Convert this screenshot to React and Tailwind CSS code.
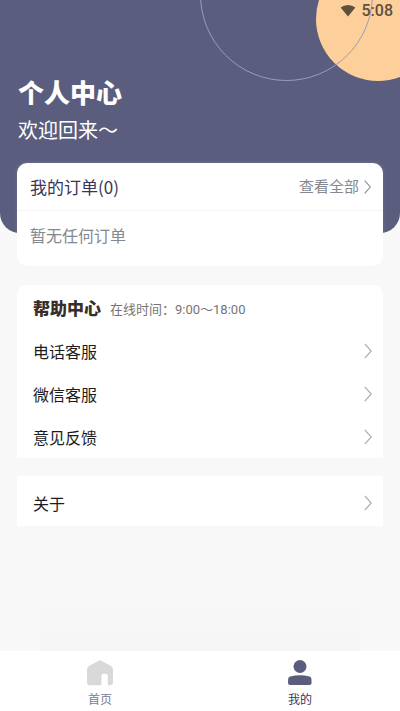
import React from "react";

const helpItems = [
  { id: 1, label: "电话客服" },
  { id: 2, label: "微信客服" },
  { id: 3, label: "意见反馈" },
];

const Chevron = ({ className }) => (
  <svg viewBox="0 0 8 16" fill="none" stroke="currentColor" className={className} aria-hidden="true">
    <path d="M0.8 0.8L7.2 8L0.8 15.2" strokeWidth="1.2" />
  </svg>
);

const HomeIcon = () => (
  <svg viewBox="0 0 26 26" className="h-[26px] w-[26px]" aria-hidden="true">
    <path
      d="M11.6 0.7Q13 0 14.4 0.7L24.4 6.2Q26 7.2 26 9V22.5Q26 25.2 23 25.2H20.8V16Q20.8 13.8 18.6 13.8H16.6Q14.4 13.8 14.4 16V25.2H3Q0 25.2 0 22.5V9Q0 7.2 1.6 6.2Z"
      fill="#d9d9d9"
    />
  </svg>
);

const UserIcon = () => (
  <svg viewBox="0 0 26 26" className="h-[26px] w-[26px]" fill="#5a5d7e" aria-hidden="true">
    <circle cx="13" cy="6.5" r="6.5" />
    <path d="M1.2 18.8Q1.5 17 3.2 16.5Q8 15.2 12.8 15.2T22.4 16.5Q24.1 17 24.4 18.8L24.6 23Q24.6 25 22.4 25H3.2Q1 25 1 23Z" />
  </svg>
);

const MenuRow = ({ label }) => (
  <li>
    <button type="button" className="flex h-[43px] w-full items-center justify-between pr-[11px] pl-4 text-base text-[#1c1c1c]">
      {label}
      <Chevron className="h-4 w-2 text-[#adadad]" />
    </button>
  </li>
);

const App = () => {
  return (
    <div className="flex min-h-screen flex-col bg-[#f8f8f8] font-['Noto_Sans_CJK_SC',sans-serif]">
      {/* Header */}
      <header className="relative h-[233px] overflow-hidden rounded-b-[20px] bg-[#5a5d7e] px-[18px] pt-[74px] text-white">
        <div className="absolute -top-[43px] -right-10 h-[124px] w-[124px] rounded-full bg-[#fccf9b]" />
        <div className="absolute -top-[92px] right-[27px] h-[173px] w-[173px] rounded-full border border-[#9a9cba]" />
        <div className="absolute top-0 right-[7px] flex h-[22px] items-center gap-[6px] text-[#5f4f3d]">
          <svg viewBox="0 0 16 12" className="h-3 w-4" aria-hidden="true">
            <path d="M8 11.6L0.6 2.6Q3.8 0 8 0T15.4 2.6Z" fill="currentColor" />
          </svg>
          <span className="font-['Roboto',sans-serif] text-base font-medium">5:08</span>
        </div>
        <h1 className="text-[26px] leading-9 font-black">个人中心</h1>
        <p className="mt-1 text-xl leading-8">欢迎回来～</p>
      </header>

      <main className="relative -mt-[70px] grow px-[17px]">
        {/* Orders */}
        <section className="rounded-[10px] bg-white shadow-[0_0_4px_rgba(255,255,255,0.15)]">
          <div className="flex h-12 items-center justify-between border-b border-[#f4f4f4] pr-3 pl-[13px]">
            <h2 className="text-[17px] text-[#39355a]">我的订单(0)</h2>
            <a href="#orders" className="flex items-center gap-[5px] text-[15px] text-[#84888f]">
              查看全部
              <Chevron className="h-[14px] w-[7px]" />
            </a>
          </div>
          <p className="px-[13px] pt-3 pb-[19px] text-base text-[#84888f]">暂无任何订单</p>
        </section>

        {/* Help center */}
        <section className="mt-[19px] rounded-t-[10px] bg-white">
          <div className="flex h-11 items-center gap-[9px] px-4 pt-[2px]">
            <h2 className="text-[17px] font-black text-[#3a2e28]">帮助中心</h2>
            <span className="pt-1 font-['Roboto','Noto_Sans_CJK_SC',sans-serif] text-[13px] text-[#757575]">
              在线时间：9:00～18:00
            </span>
          </div>
          <ul>
            {helpItems.map((item) => (
              <MenuRow key={item.id} label={item.label} />
            ))}
          </ul>
        </section>

        {/* About */}
        <ul className="mt-[18px] bg-white pt-[5px] pb-[2px]">
          <MenuRow label="关于" />
        </ul>
      </main>

      <div className="mx-10 h-14 bg-linear-to-b from-[#f8f8f8] to-[#f5f5f5]" />

      {/* Tab bar */}
      <nav className="flex h-[60px] bg-white text-xs">
        <a href="#home" className="flex flex-1 flex-col items-center gap-[5px] pt-[9px] text-[#777b92]">
          <HomeIcon />
          首页
        </a>
        <a href="#mine" aria-current="page" className="flex flex-1 flex-col items-center gap-[5px] pt-[9px] text-[#39355a]">
          <UserIcon />
          我的
        </a>
      </nav>
    </div>
  );
};

export default App;
